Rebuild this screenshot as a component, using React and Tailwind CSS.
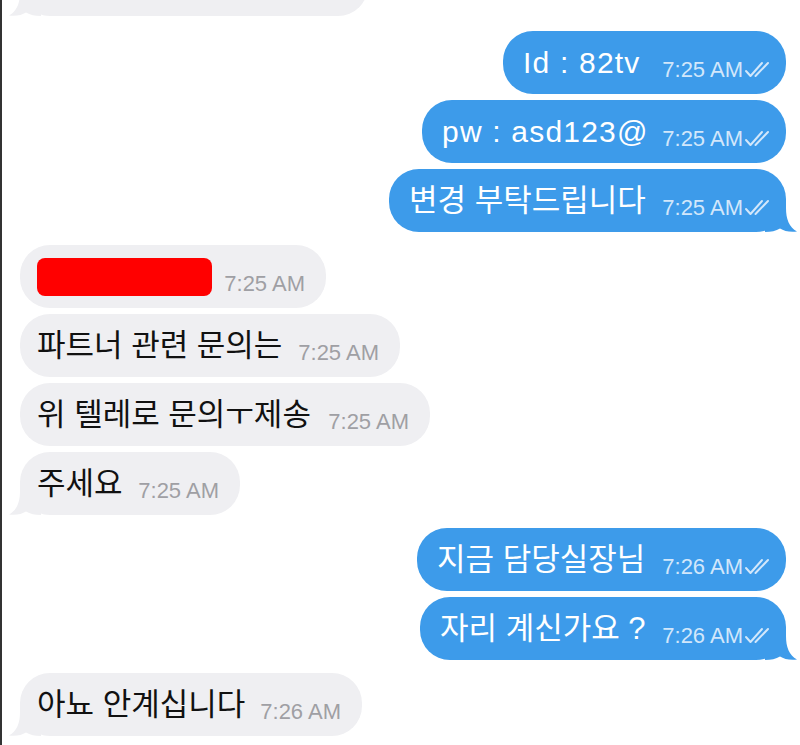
import React from 'react';

const FONT = { fontFamily: '"Liberation Sans", "Noto Sans CJK KR", sans-serif' };

// chat log, top to bottom; widths are taken from the screenshot
const messages = [
  { id: 0, side: 'in', text: '', time: '', w: 'w-[348px]', gap: '-mt-[47px]', tail: true },
  { id: 1, side: 'out', text: 'Id : 82tv', latin: true, time: '7:25 AM', w: 'w-[283px]', gap: 'mt-[15px]' },
  { id: 2, side: 'out', text: 'pw : asd123@', latin: true, time: '7:25 AM', w: 'w-[364px]', gap: 'mt-[6px]' },
  { id: 3, side: 'out', text: '변경 부탁드립니다', time: '7:25 AM', w: 'w-[397px]', gap: 'mt-[6px]', tail: true },
  { id: 4, side: 'in', redacted: true, time: '7:25 AM', w: 'w-[306px]', gap: 'mt-[13px]' },
  { id: 5, side: 'in', text: '파트너 관련 문의는', time: '7:25 AM', w: 'w-[380px]', gap: 'mt-[6px]' },
  { id: 6, side: 'in', text: '위 텔레로 문의ㅜ제송', time: '7:25 AM', w: 'w-[410px]', gap: 'mt-[6px]' },
  { id: 7, side: 'in', text: '주세요', time: '7:25 AM', w: 'w-[220px]', gap: 'mt-[6px]', tail: true },
  { id: 8, side: 'out', text: '지금 담당실장님', time: '7:26 AM', w: 'w-[369px]', gap: 'mt-[13px]' },
  { id: 9, side: 'out', text: '자리 계신가요 ?', time: '7:26 AM', w: 'w-[366px]', gap: 'mt-[6px]', tail: true },
  { id: 10, side: 'in', text: '아뇨 안계십니다', time: '7:26 AM', w: 'w-[342px]', gap: 'mt-[13px]', tail: true },
];

function ReadCheck() {
  return (
    <svg width="31" height="19" viewBox="0 0 31 19" fill="none" stroke="currentColor" strokeWidth="2" strokeLinecap="round" strokeLinejoin="round">
      <path d="M2 11 L6.5 16 L18 3" />
      <path d="M11.5 16 L24 3" />
    </svg>
  );
}

function Tail({ out }) {
  return (
    <svg
      className={out ? 'absolute bottom-0 right-[-11px]' : 'absolute bottom-0 left-[-11px] -scale-x-100'}
      width="32"
      height="30"
      viewBox="0 0 32 30"
    >
      <path
        d="M0 0 H21 V6 C21 17 24 25 32 29.5 C25 30.5 19 29 15 26.5 C11 29 6 30 0 30 Z"
        fill={out ? '#3d9bea' : '#efeff2'}
      />
    </svg>
  );
}

function Bubble({ msg }) {
  const out = msg.side === 'out';
  return (
    <div
      className={`relative flex h-[63px] shrink-0 items-center justify-between rounded-[30px] ${msg.w} ${msg.gap} ${
        out
          ? 'self-end mr-[14px] bg-[#3d9bea] pl-[20px] pr-[11px] text-white'
          : 'self-start ml-[18px] bg-[#efeff2] pl-[17px] pr-[21px] text-[#111]'
      }`}
    >
      {msg.tail && <Tail out={out} />}
      {msg.redacted ? (
        <div className="h-[38px] w-[175px] rounded-[8px] bg-[#ff0000]" />
      ) : (
        <span className={`relative whitespace-nowrap leading-none ${msg.latin ? 'text-[30px] tracking-[0.04em]' : 'text-[31px]'}`}>
          {msg.text}
        </span>
      )}
      {msg.time && (
        <span
          className={`relative flex translate-y-[7px] items-center whitespace-nowrap text-[22px] leading-none ${
            out ? 'text-[#d2e7fb]' : 'text-[#9f9fa4]'
          }`}
        >
          {msg.time}
          {out && (
            <span className="ml-[1px] flex">
              <ReadCheck />
            </span>
          )}
        </span>
      )}
    </div>
  );
}

export default function App() {
  return (
    <div className="flex h-[745px] w-[800px] flex-col overflow-hidden border-l-2 border-[#333] bg-white" style={FONT}>
      {messages.map((m) => (
        <Bubble key={m.id} msg={m} />
      ))}
    </div>
  );
}
